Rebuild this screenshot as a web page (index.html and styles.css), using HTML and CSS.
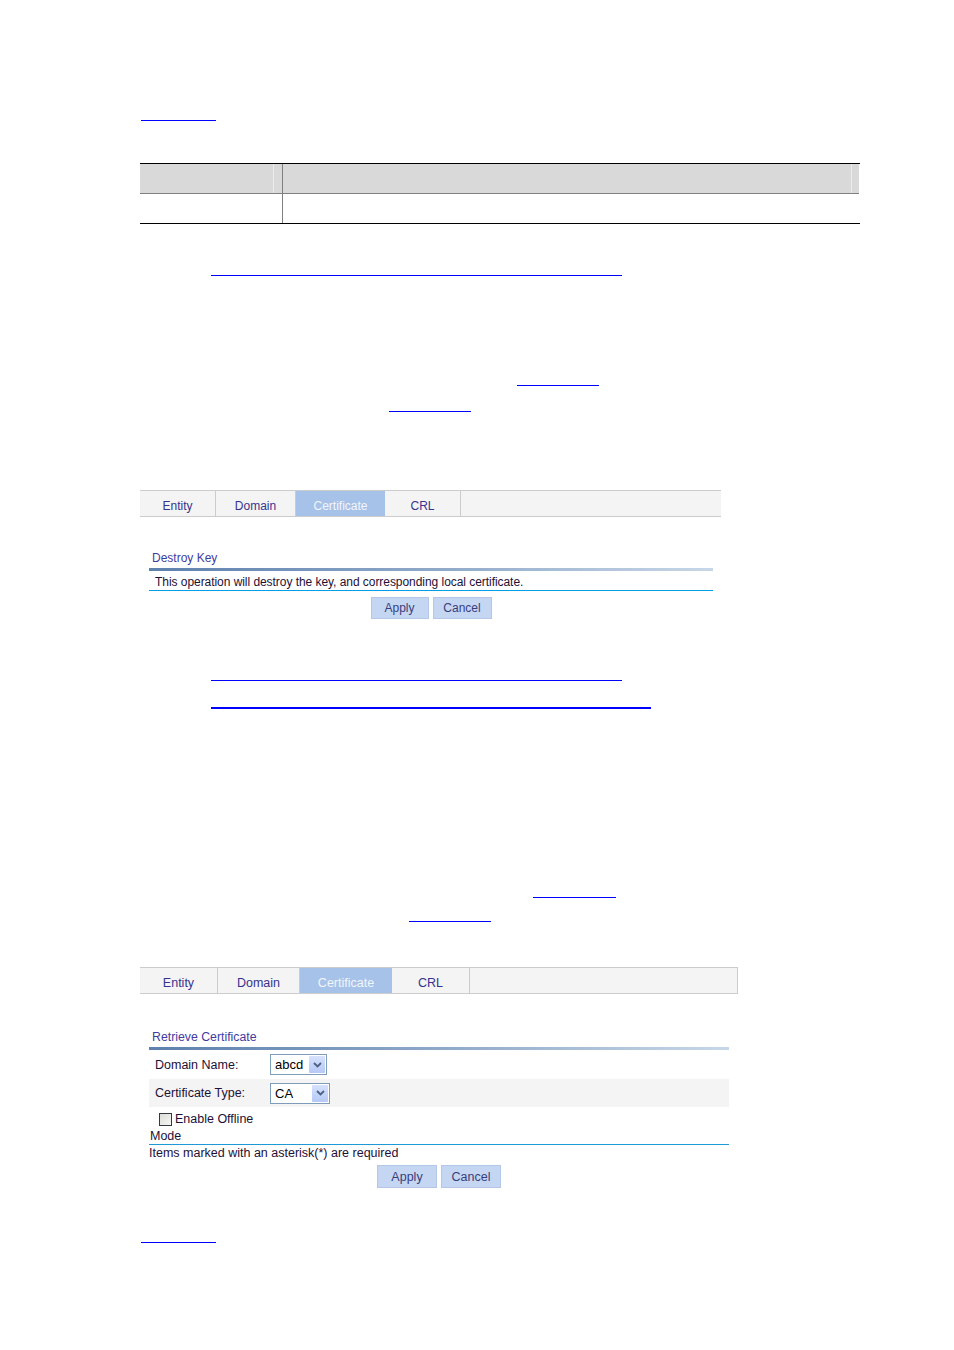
FILE: index.html
```html
<!DOCTYPE html>
<html>
<head>
<meta charset="utf-8">
<link rel="stylesheet" href="styles.css">
</head>
<body>
<div class="page">
  <div class="ul ul-a"></div>

  <div class="tbl">
    <div class="trow thead">
      <div class="tc1 th1"></div>
      <div class="tc2 th2"></div>
    </div>
    <div class="trow tbody">
      <div class="tc1"></div>
      <div class="tc2"></div>
    </div>
  </div>

  <div class="ul ul-b"></div>
  <div class="ul ul-c"></div>
  <div class="ul ul-d"></div>

  <div class="tabs tabs1">
    <div class="tab t1-entity">Entity</div>
    <div class="tab t1-domain">Domain</div>
    <div class="tab active t1-cert">Certificate</div>
    <div class="tab t1-crl">CRL</div>
  </div>

  <div class="section s1">
    <div class="sec-title">Destroy Key</div>
    <div class="grad"></div>
    <div class="msg">This operation will destroy the key, and corresponding local certificate.</div>
    <div class="btns">
      <div class="btn b1-apply">Apply</div>
      <div class="btn b1-cancel">Cancel</div>
    </div>
  </div>

  <div class="ul ul-e"></div>
  <div class="ul ul-f"></div>
  <div class="ul ul-g"></div>
  <div class="ul ul-h"></div>

  <div class="tabs tabs2">
    <div class="tab t2-entity">Entity</div>
    <div class="tab t2-domain">Domain</div>
    <div class="tab active t2-cert">Certificate</div>
    <div class="tab t2-crl">CRL</div>
  </div>

  <div class="section s2">
    <div class="sec-title">Retrieve Certificate</div>
    <div class="grad"></div>
    <div class="frow">
      <div class="flabel">Domain Name:</div>
      <div class="sel sel-a"><span class="sel-val">abcd</span><span class="sel-btn"><svg width="9" height="6" viewBox="0 0 9 6"><path d="M1 1 L4.5 4.5 L8 1" fill="none" stroke="#4d6185" stroke-width="1.8"/></svg></span></div>
    </div>
    <div class="frow alt">
      <div class="flabel">Certificate Type:</div>
      <div class="sel sel-b"><span class="sel-val">CA</span><span class="sel-btn"><svg width="9" height="6" viewBox="0 0 9 6"><path d="M1 1 L4.5 4.5 L8 1" fill="none" stroke="#4d6185" stroke-width="1.8"/></svg></span></div>
    </div>
    <div class="chkrow"><span class="chk"></span><span>Enable Offline</span></div>
    <div class="mode">Mode</div>
    <div class="note">Items marked with an asterisk(*) are required</div>
    <div class="btns btns2">
      <div class="btn b2-apply">Apply</div>
      <div class="btn b2-cancel">Cancel</div>
    </div>
  </div>

  <div class="ul ul-i"></div>
</div>
</body>
</html>
```

FILE: styles.css
```css
html, body {
  margin: 0;
  padding: 0;
  background: #ffffff;
}
body {
  font-family: "Liberation Sans", Arial, sans-serif;
  font-size: 12px;
  color: #1e1036;
}
.page {
  width: 954px;
  height: 1350px;
  padding-left: 140px;
  box-sizing: border-box;
  padding-top: 120px;
}

/* link underlines */
.ul { height: 1px; background: #0000ff; }
.ul-a { margin-left: 1px; width: 75px; }
.ul-b { margin-top: 51px; margin-left: 71px; width: 411px; }
.ul-c { margin-top: 109px; margin-left: 377px; width: 82px; }
.ul-d { margin-top: 25px; margin-left: 249px; width: 82px; }
.ul-e { margin-top: 61px; margin-left: 71px; width: 411px; }
.ul-f { margin-top: 26px; margin-left: 71px; width: 440px; height: 2px; }
.ul-g { margin-top: 188px; margin-left: 393px; width: 83px; }
.ul-h { margin-top: 23px; margin-left: 269px; width: 82px; }
.ul-i { margin-top: 54px; margin-left: 1px; width: 75px; }

/* table */
.tbl {
  margin-top: 42px;
  width: 720px;
  border-top: 1px solid #000000;
  border-bottom: 1px solid #000000;
}
.trow { display: flex; height: 29px; }
.thead {
  height: 29px;
  border-bottom: 1px solid #808080;
  margin-right: 1px;
}
.tc1 { width: 142px; border-right: 1px solid #808080; }
.tc2 { flex: 1; }
.thead .tc1, .thead .tc2 { background: #d9d9d9; }
.th1 { box-shadow: inset -8px 0 0 #d9d9d9, inset -9px 0 0 #ececec; }
.th2 { box-shadow: inset -7px 0 0 #d9d9d9, inset -8px 0 0 #ececec; }

/* tabs */
.tabs {
  display: flex;
  height: 25px;
  background: #f4f4f4;
  border-top: 1px solid #cccccc;
  border-bottom: 1px solid #cccccc;
  box-sizing: content-box;
}
.tabs1 { margin-top: 78px; width: 581px; }
.tabs2 { margin-top: 45px; width: 597px; border-right: 1px solid #cccccc; }
.tab {
  display: flex;
  align-items: center;
  justify-content: center;
  color: #36338f;
  border-right: 1px solid #cccccc;
  padding-top: 5px;
  box-sizing: border-box;
}
.tab.active {
  background: #a6c2e8;
  color: #f2f5fb;
  border-right: none;
}
.t1-entity { width: 76px; }
.t1-domain { width: 80px; }
.t1-cert { width: 89px; }
.t1-crl { width: 76px; }
.tabs2 .tab { font-size: 12.5px; }
.t2-entity { width: 78px; }
.t2-domain { width: 82px; }
.t2-cert { width: 92px; }
.t2-crl { width: 78px; }

/* sections */
.section { margin-left: 9px; }
.s1 { width: 564px; margin-top: 33px; }
.s2 { width: 580px; margin-top: 35px; }
.sec-title {
  height: 17px;
  line-height: 17px;
  padding-left: 3px;
  padding-top: 1px;
  margin-top: -1px;
  color: #3f3c9e;
}
.s2 .sec-title { font-size: 12.3px; }
.grad {
  height: 3px;
  margin-top: 1px;
  background: linear-gradient(to right, #5d80ae, #8ea8c8 50%, #c8d7e8);
}
.msg {
  height: 17px;
  padding-top: 2px;
  line-height: 19px;
  padding-left: 6px;
  border-bottom: 1px solid #00a0e9;
  letter-spacing: -0.05px;
}
.btns {
  display: flex;
  justify-content: center;
  gap: 4px;
  margin-top: 6px;
}
.btn {
  height: 22px;
  box-sizing: border-box;
  background: #c5d6f2;
  border: 1px solid #b4c7e7;
  color: #393d7d;
  display: flex;
  align-items: center;
  justify-content: center;
}
.b1-apply { width: 58px; }
.b1-cancel { width: 59px; }
.btns2 { gap: 4px; margin-top: 4px; }
.btns2 .btn { font-size: 12.5px; height: 23px; }
.b2-apply { width: 60px; }
.b2-cancel { width: 60px; }

/* form */
.frow {
  display: flex;
  align-items: center;
  height: 29px;
  font-size: 12.5px;
}
.frow.alt { background: #f4f4f4; height: 28px; }
.flabel { width: 115px; padding-left: 6px; }
.sel {
  display: flex;
  align-items: center;
  height: 21px;
  box-sizing: border-box;
  border: 1px solid #7f9db9;
  background: #ffffff;
  font-size: 13px;
  color: #000000;
}
.sel-a { width: 57px; }
.sel-b { width: 60px; }
.sel-val { flex: 1; padding-left: 4px; }
.sel-btn {
  width: 16px;
  height: 17px;
  margin-right: 1px;
  background: linear-gradient(#d6e2fd, #b5c9f6);
  border-radius: 1px;
  display: flex;
  align-items: center;
  justify-content: center;
}
.chkrow {
  display: flex;
  align-items: center;
  height: 18px;
  margin-top: 3px;
  padding-left: 10px;
  font-size: 12.5px;
}
.chk {
  width: 13px;
  height: 13px;
  box-sizing: border-box;
  border: 1px solid #303840;
  background: linear-gradient(135deg, #dcdcd8, #f6f6f4);
  margin-right: 3px;
}
.mode {
  height: 16px;
  line-height: 16px;
  padding-left: 1px;
  font-size: 12.5px;
  border-bottom: 1px solid #1d9ad6;
}
.note {
  height: 16px;
  line-height: 16px;
  font-size: 12.5px;
}
```
